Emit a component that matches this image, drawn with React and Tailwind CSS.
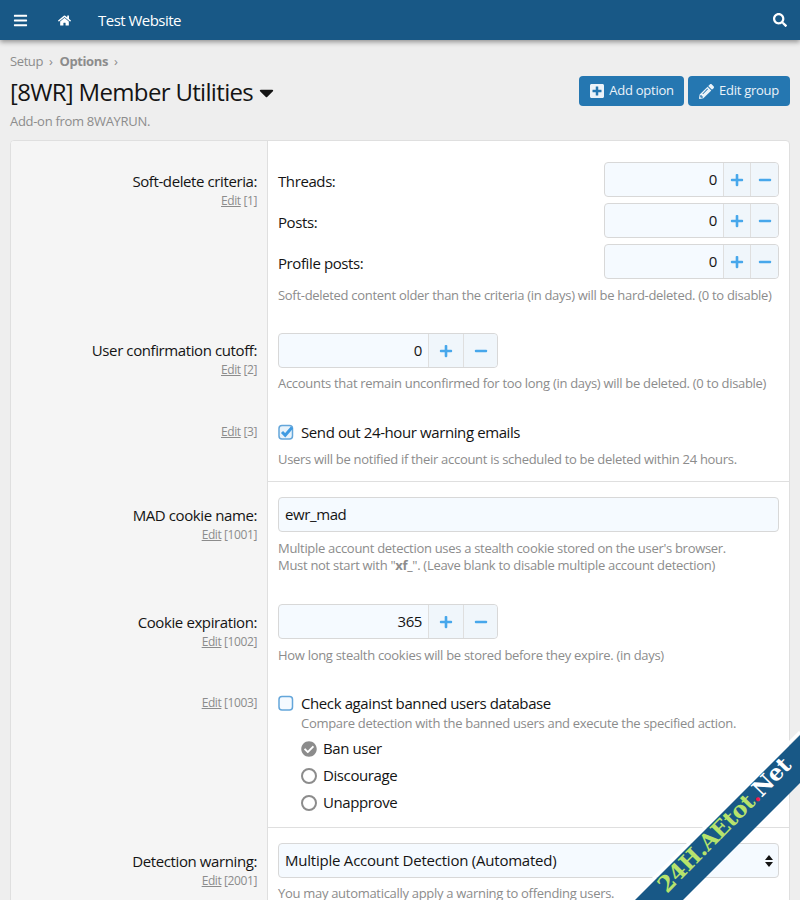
import React from 'react';
import { FaBars, FaHome, FaSearch, FaPlusSquare, FaPencilAlt, FaPlus, FaMinus, FaCaretDown, FaCheckCircle } from 'react-icons/fa';

const Hint = ({ children, className = '' }) => (
  <p className={`text-[13px] leading-[17px] text-[#8c8c8c] tracking-[-0.023em] ${className}`}>{children}</p>
);

const EditLink = ({ n }) => (
  <div className="mt-[1px] text-[12px] leading-[17px] text-[#8c8c8c]">
    <span className="underline">Edit</span> [{n}]
  </div>
);

const Stepper = ({ value, width, plusW, minusW }) => (
  <div className={`flex h-[35px] rounded border border-[#d8d8d8] bg-[#f5faff] ${width}`}>
    <div className="flex-1 flex items-center justify-end pr-[6px] text-[15px] text-[#141414]">{value}</div>
    <div className={`flex items-center justify-center border-l border-[#dfdfdf] bg-[#f0f6fb] text-[#47a7eb] text-[14px] ${plusW}`}><FaPlus /></div>
    <div className={`flex items-center justify-center border-l border-[#dfdfdf] bg-[#f0f6fb] rounded-r text-[#47a7eb] text-[14px] ${minusW}`}><FaMinus /></div>
  </div>
);

const Row = ({ label, edit, labelTop, top, bottom, divider, children }) => (
  <div className="grid grid-cols-[256px_1fr]">
    <div className={`bg-[#f5f5f5] text-right pr-[10px] ${labelTop}`}>
      {label && <div className="text-[15px] leading-[20px] text-[#141414]">{label}</div>}
      <EditLink n={edit} />
    </div>
    <div className={`border-l border-[#dfdfdf] px-[10px] ${top} ${bottom} ${divider ? 'border-b border-b-[#dfdfdf]' : ''}`}>
      {children}
    </div>
  </div>
);

const CountRow = ({ label, mb }) => (
  <div className={`flex items-center ${mb}`}>
    <span className="flex-1 pt-[3px] text-[15px] text-[#141414]">{label}</span>
    <Stepper value="0" width="w-[175px]" plusW="w-[27px]" minusW="w-[28px]" />
  </div>
);

const Radio = ({ label, checked }) => (
  <div className="flex items-center h-[27px] text-[15px] text-[#141414]">
    {checked
      ? <FaCheckCircle className="text-[#8c8c8c] text-[16px] mr-[6px]" />
      : <span className="w-[16px] h-[16px] rounded-full border-2 border-[#8c8c8c] mr-[6px]" />}
    {label}
  </div>
);

export default function App() {
  return (
    <div className="relative w-[800px] h-[900px] overflow-hidden bg-[#eeeeee] font-['Open_Sans',sans-serif] tracking-[-0.025em]">
      <header className="flex items-center h-[40px] bg-[#185886] text-white shadow-[0_2px_5px_rgba(0,0,0,0.4)] relative">
        <FaBars className="ml-[13px] text-[15px]" />
        <FaHome className="ml-[30px] text-[13px]" />
        <span className="ml-[27px] text-[15px] tracking-[-0.035em]">Test Website</span>
        <FaSearch className="ml-auto mr-[13px] text-[14px]" />
      </header>

      <div className="px-[10px]">
        <nav className="flex items-center gap-[6px] mt-[14px] h-[16px] text-[13px] text-[#8c8c8c]">
          <span>Setup</span><span>›</span><span className="ml-[1px] font-bold">Options</span><span>›</span>
        </nav>

        <div className="flex justify-between mt-[6px]">
          <div>
            <h1 className="flex items-center text-[24px] leading-[32px] tracking-[-0.028em] text-[#141414]">
              [8WR] Member Utilities <FaCaretDown className="ml-[2px] text-[23px]" />
            </h1>
            <Hint className="mt-[5px]">Add-on from 8WAYRUN.</Hint>
          </div>
          <div className="flex gap-[4px] h-[30px] text-[13px] tracking-[-0.02em] text-[#ebf3f9]">
            <button className="flex items-center gap-[4px] w-[105px] justify-center rounded bg-[#2577b1]"><FaPlusSquare className="text-[16px]" />Add option</button>
            <button className="flex items-center gap-[5px] w-[102px] justify-center rounded bg-[#2577b1]"><FaPencilAlt className="text-[15px]" />Edit group</button>
          </div>
        </div>

        <div className="mt-[10px] rounded-t border border-[#dfdfdf] bg-white overflow-hidden">
          <Row label="Soft-delete criteria:" edit="1" labelTop="pt-[30px]" top="pt-[21px]" bottom="pb-[21px]">
            <CountRow label="Threads:" mb="mb-[6px]" />
            <CountRow label="Posts:" mb="mb-[6px]" />
            <CountRow label="Profile posts:" mb="mb-[8px]" />
            <Hint>Soft-deleted content older than the criteria (in days) will be hard-deleted. (0 to disable)</Hint>
          </Row>
          <Row label="User confirmation cutoff:" edit="2" labelTop="pt-[15px]" top="pt-[8px]" bottom="pb-[30px]">
            <Stepper value="0" width="w-[220px]" plusW="w-[35px]" minusW="w-[34px]" />
            <Hint className="mt-[7px]">Accounts that remain unconfirmed for too long (in days) will be deleted. (0 to disable)</Hint>
          </Row>
          <Row edit="3" labelTop="pt-[0px]" top="" bottom="pb-[13px]" divider>
            <div className="flex items-center h-[20px] text-[15px] text-[#141414]">
              <svg className="mr-[7px]" width="16" height="16" viewBox="0 0 16 16" fill="none">
                <rect x="1" y="1.5" width="13.5" height="13.5" rx="3" fill="#e8f3fb" stroke="#64a6da" strokeWidth="1.5" />
                <path d="M4 8l3.2 3.2L14 3.5" stroke="#3f9be2" strokeWidth="3" />
              </svg>
              Send out 24-hour warning emails
            </div>
            <Hint className="mt-[9px]">Users will be notified if their account is scheduled to be deleted within 24 hours.</Hint>
          </Row>
          <Row label="MAD cookie name:" edit="1001" labelTop="pt-[23px]" top="pt-[15px]" bottom="pb-[30px]">
            <div className="flex items-center h-[35px] rounded border border-[#d8d8d8] bg-[#f5faff] px-[6px] text-[15px] text-[#141414]">ewr_mad</div>
            <Hint className="mt-[8px]">Multiple account detection uses a stealth cookie stored on the user's browser.<br />Must not start with "<b>xf_</b>". (Leave blank to disable multiple account detection)</Hint>
          </Row>
          <Row label="Cookie expiration:" edit="1002" labelTop="pt-[8px]" top="" bottom="pb-[29px]">
            <Stepper value="365" width="w-[220px]" plusW="w-[35px]" minusW="w-[34px]" />
            <Hint className="mt-[8px]">How long stealth cookies will be stored before they expire. (in days)</Hint>
          </Row>
          <Row edit="1003" labelTop="pt-[0px]" top="" bottom="pb-[11px]" divider>
            <div className="flex items-center h-[20px] text-[15px] text-[#141414]">
              <svg className="mr-[7px]" width="16" height="16" viewBox="0 0 16 16" fill="none">
                <rect x="1" y="1.5" width="13.5" height="13.5" rx="3" fill="#f5faff" stroke="#64a6da" strokeWidth="1.5" />
              </svg>
              Check against banned users database
            </div>
            <Hint className="ml-[23px] mt-[2px] mb-[3px]">Compare detection with the banned users and execute the specified action.</Hint>
            <div className="ml-[23px]">
              <Radio label="Ban user" checked />
              <Radio label="Discourage" />
              <Radio label="Unapprove" />
            </div>
          </Row>
          <Row label="Detection warning:" edit="2001" labelTop="pt-[23px]" top="pt-[15px]" bottom="pb-[20px]">
            <div className="flex items-center justify-between h-[35px] rounded border border-[#d8d8d8] bg-[#f5faff] pl-[6px] pr-[5px] text-[15px] tracking-[-0.015em] text-[#141414]">
              Multiple Account Detection (Automated)
              <svg width="8" height="12" viewBox="0 0 8 12" fill="#141414"><path d="M4 0l4 5H0zM4 12L0 7h8z" /></svg>
            </div>
            <Hint className="mt-[7px]">You may automatically apply a warning to offending users.</Hint>
          </Row>
        </div>
      </div>

      <svg className="absolute right-0 bottom-0" width="170" height="170" viewBox="630 730 170 170">
        <polygon points="635,900 800,735 800,783 683,900" fill="#185886" />
        <polyline points="632,900 800,732" stroke="#ffffff" strokeWidth="3" fill="none" />
        <text transform="translate(667 894) rotate(-45.5)" fontFamily="'DejaVu Serif',serif" fontWeight="700" fontSize="22.5">
          <tspan fill="#b7e36c">24H.AEtot</tspan><tspan fill="#ee1c4e">.</tspan><tspan fill="#ffffff">Net</tspan>
        </text>
      </svg>
    </div>
  );
}
